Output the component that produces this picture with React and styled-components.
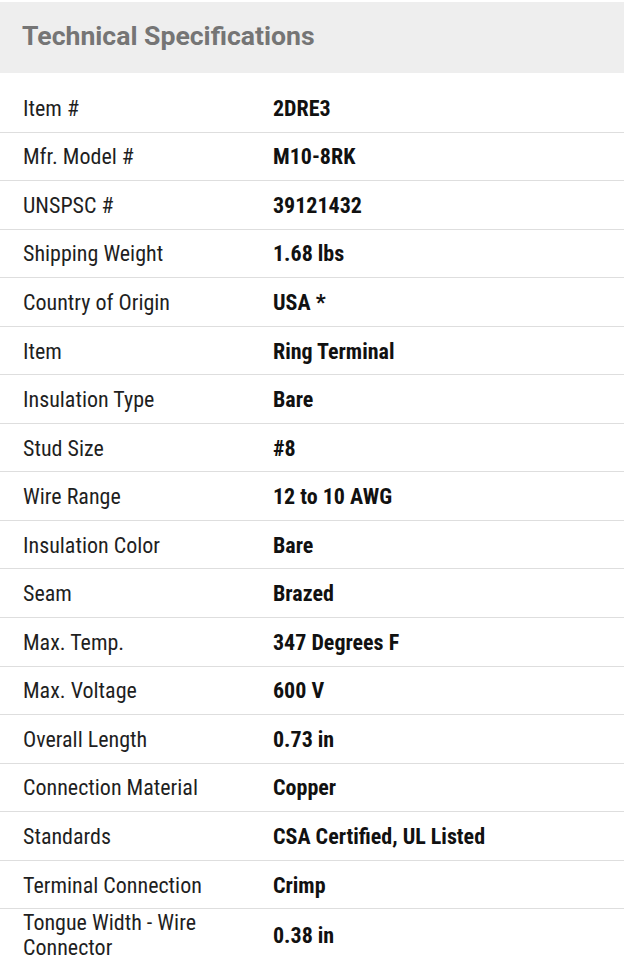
import React from "react";
import styled, { createGlobalStyle } from "styled-components";

const Global = createGlobalStyle`
  html, body { margin: 0; padding: 0; background: #fff; }
  body { font-family: Roboto, "Liberation Sans", sans-serif; }
`;

const Page = styled.div`
  width: 624px;
  padding-top: 2px;
`;

const Header = styled.div`
  height: 71px;
  box-sizing: border-box;
  padding-bottom: 3px;
  background: #eeeeee;
  display: flex;
  align-items: center;
  padding-left: 22px;
`;

const Title = styled.h2`
  margin: 0;
  font-family: Roboto, sans-serif;
  font-weight: 700;
  font-size: 26.6px;
  color: #757575;
  line-height: 30px;
`;

const Table = styled.div`
  margin-top: 11px;
  display: flex;
  flex-direction: column;
`;

const Row = styled.div`
  display: grid;
  grid-template-columns: 250px 1fr;
  align-items: center;
  min-height: 48.56px;
  box-sizing: border-box;
  border-bottom: 1px solid #dedede;
  padding: 1px 0 0 23px;
  font-family: Roboto, sans-serif;
  font-stretch: 75%;
  font-size: 22px;
  line-height: 25px;
`;

const Label = styled.div`
  color: #1f1f1f;
  font-weight: 400;
  padding-right: 20px;
`;

const Value = styled.div`
  color: #111;
  font-weight: 700;
`;

const specs = [
  ["Item #", "2DRE3"],
  ["Mfr. Model #", "M10-8RK"],
  ["UNSPSC #", "39121432"],
  ["Shipping Weight", "1.68 lbs"],
  ["Country of Origin", "USA *"],
  ["Item", "Ring Terminal"],
  ["Insulation Type", "Bare"],
  ["Stud Size", "#8"],
  ["Wire Range", "12 to 10 AWG"],
  ["Insulation Color", "Bare"],
  ["Seam", "Brazed"],
  ["Max. Temp.", "347 Degrees F"],
  ["Max. Voltage", "600 V"],
  ["Overall Length", "0.73 in"],
  ["Connection Material", "Copper"],
  ["Standards", "CSA Certified, UL Listed"],
  ["Terminal Connection", "Crimp"],
  ["Tongue Width - Wire Connector", "0.38 in"],
];

export default function App() {
  return (
    <Page>
      <Global />
      <Header>
        <Title>Technical Specifications</Title>
      </Header>
      <Table>
        {specs.map(([k, v]) => (
          <Row key={k}>
            <Label>{k}</Label>
            <Value>{v}</Value>
          </Row>
        ))}
      </Table>
    </Page>
  );
}
